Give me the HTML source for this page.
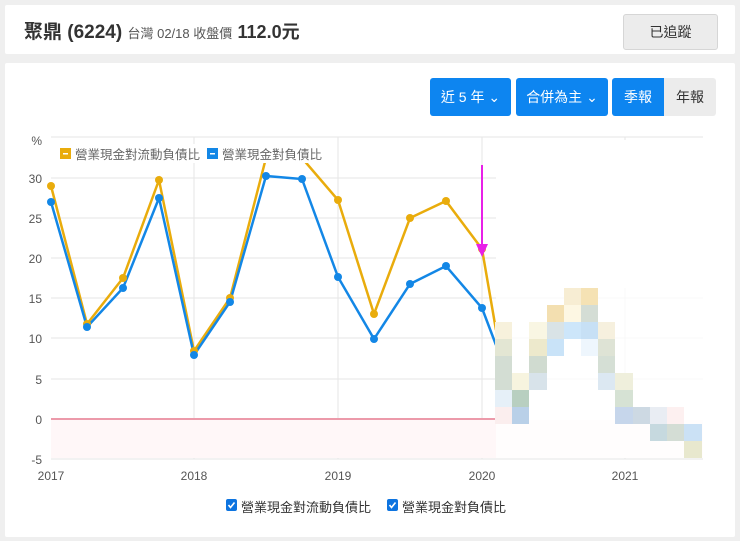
<!DOCTYPE html><html><head><meta charset="utf-8"><style>
body{margin:0;width:740px;height:541px;background:#efefef;font-family:"Liberation Sans","Noto Sans CJK TC",sans-serif;position:relative;overflow:hidden}
.card{position:absolute;background:#fff;left:5px;width:730px;border-radius:2px}
.btn{position:absolute;top:78px;height:38px;line-height:38px;color:#fff;background:#0d85f0;font-size:14px;text-align:center;border-radius:3px}
</style></head><body>
<div class="card" style="top:5px;height:49px"></div>
<div style="position:absolute;left:24px;top:17px;font-size:19px;font-weight:bold;color:#333">聚鼎 (6224) <span style="font-size:13px;font-weight:normal;color:#555">台灣 02/18 收盤價</span> <span style="font-size:18px">112.0元</span></div>
<div style="position:absolute;left:623px;top:14px;width:93px;height:34px;background:#ececec;border:1px solid #d6d6d6;border-radius:3px;text-align:center;line-height:34px;font-size:14px;color:#333">已追蹤</div>
<div class="card" style="top:63px;height:474px"></div>
<div class="btn" style="left:430px;width:81px">近 5 年 ⌄</div>
<div class="btn" style="left:516px;width:92px">合併為主 ⌄</div>
<div class="btn" style="left:612px;width:52px;border-radius:3px 0 0 3px">季報</div>
<div class="btn" style="left:664px;width:52px;background:#ececec;color:#333;border-radius:0 3px 3px 0">年報</div>
<svg style="position:absolute;left:0;top:0" width="740" height="541">
<g stroke="#e6e6e6" stroke-width="1">
<line x1="51" y1="137" x2="703" y2="137"/><line x1="51" y1="178" x2="703" y2="178"/><line x1="51" y1="218" x2="703" y2="218"/><line x1="51" y1="258" x2="703" y2="258"/><line x1="51" y1="298" x2="703" y2="298"/><line x1="51" y1="338" x2="703" y2="338"/><line x1="51" y1="379" x2="703" y2="379"/><line x1="51" y1="459" x2="703" y2="459"/>
<line x1="194" y1="137" x2="194" y2="459"/><line x1="338" y1="137" x2="338" y2="459"/><line x1="482" y1="137" x2="482" y2="459"/><line x1="625" y1="137" x2="625" y2="459"/>
</g>
<rect x="51" y="420" width="652" height="38" fill="#fff7f8"/>
<line x1="51" y1="419" x2="495" y2="419" stroke="#ec9aaa" stroke-width="2"/>
<g font-size="12" fill="#555" text-anchor="end"><text x="42" y="145">%</text><text x="42" y="183">30</text><text x="42" y="223">25</text><text x="42" y="263">20</text><text x="42" y="303">15</text><text x="42" y="343">10</text><text x="42" y="384">5</text><text x="42" y="424">0</text><text x="42" y="464">-5</text></g>
<g font-size="12" fill="#555" text-anchor="middle"><text x="51" y="480">2017</text><text x="194" y="480">2018</text><text x="338" y="480">2019</text><text x="482" y="480">2020</text><text x="625" y="480">2021</text></g>
<polyline fill="none" stroke="#e9ac0c" stroke-width="2.5" points="51,186 87,324 123,278 159,180 194,351 230,298 266,158 302,158 338,200 374,314 410,218 446,201 482,249 496,330"/>
<polyline fill="none" stroke="#1387e6" stroke-width="2.5" points="51,202 87,327 123,288 159,198 194,355 230,302 266,176 302,179 338,277 374,339 410,284 446,266 482,308 496,345"/>
<g fill="#e9ac0c"><circle cx="51" cy="186" r="4"/><circle cx="87" cy="324" r="4"/><circle cx="123" cy="278" r="4"/><circle cx="159" cy="180" r="4"/><circle cx="194" cy="351" r="4"/><circle cx="230" cy="298" r="4"/><circle cx="338" cy="200" r="4"/><circle cx="374" cy="314" r="4"/><circle cx="410" cy="218" r="4"/><circle cx="446" cy="201" r="4"/><circle cx="482" cy="249" r="4"/></g>
<g fill="#1387e6"><circle cx="51" cy="202" r="4"/><circle cx="87" cy="327" r="4"/><circle cx="123" cy="288" r="4"/><circle cx="159" cy="198" r="4"/><circle cx="194" cy="355" r="4"/><circle cx="230" cy="302" r="4"/><circle cx="266" cy="176" r="4"/><circle cx="302" cy="179" r="4"/><circle cx="338" cy="277" r="4"/><circle cx="374" cy="339" r="4"/><circle cx="410" cy="284" r="4"/><circle cx="446" cy="266" r="4"/><circle cx="482" cy="308" r="4"/></g>
<rect x="496" y="140" width="208" height="148" fill="#fff"/>
<rect x="496" y="288" width="208" height="170" fill="#fff" opacity="0.7"/>
<g>
<rect x="495" y="322" width="17" height="17" fill="#f7f1dc"/><rect x="495" y="339" width="17" height="17" fill="#e3e6d3"/><rect x="495" y="356" width="17" height="34" fill="#d3ddd3"/><rect x="495" y="390" width="17" height="17" fill="#e6f0f8"/><rect x="495" y="407" width="17" height="17" fill="#fbeeee"/>
<rect x="512" y="373" width="17" height="17" fill="#f7f4df"/><rect x="512" y="390" width="17" height="17" fill="#b8cfc0"/><rect x="512" y="407" width="17" height="17" fill="#b9d0e8"/>
<rect x="529" y="322" width="18" height="17" fill="#f9f6e3"/><rect x="529" y="339" width="18" height="17" fill="#ede9cc"/><rect x="529" y="356" width="18" height="17" fill="#d0dbd0"/><rect x="529" y="373" width="18" height="17" fill="#d8e3ea"/>
<rect x="547" y="305" width="17" height="17" fill="#f3dfb0"/><rect x="547" y="322" width="17" height="17" fill="#d9e3e6"/><rect x="547" y="339" width="17" height="17" fill="#c9e3f8"/>
<rect x="564" y="288" width="17" height="17" fill="#f7edd3"/><rect x="564" y="305" width="17" height="17" fill="#fdf7e3"/><rect x="564" y="322" width="17" height="17" fill="#cde6fa"/>
<rect x="581" y="288" width="17" height="17" fill="#f5e2b4"/><rect x="581" y="305" width="17" height="17" fill="#d4ddd5"/><rect x="581" y="322" width="17" height="17" fill="#c7e0f5"/><rect x="581" y="339" width="17" height="17" fill="#eef6fd"/>
<rect x="598" y="322" width="17" height="17" fill="#f6f0de"/><rect x="598" y="339" width="17" height="17" fill="#dee3d5"/><rect x="598" y="356" width="17" height="17" fill="#d5dfd5"/><rect x="598" y="373" width="17" height="17" fill="#dce8f2"/>
<rect x="615" y="373" width="18" height="17" fill="#efefdc"/><rect x="615" y="390" width="18" height="17" fill="#d6e2d4"/><rect x="615" y="407" width="18" height="17" fill="#c6d6eb"/>
<rect x="633" y="407" width="17" height="17" fill="#cdd9e3"/><rect x="650" y="407" width="17" height="17" fill="#e9edf3"/><rect x="650" y="424" width="17" height="17" fill="#c6d9df"/>
<rect x="667" y="407" width="17" height="17" fill="#fdf0f0"/><rect x="667" y="424" width="17" height="17" fill="#d4ddd5"/><rect x="684" y="424" width="18" height="17" fill="#cbe1f5"/><rect x="684" y="441" width="18" height="17" fill="#e8e8ce"/>
</g>
<line x1="482" y1="165" x2="482" y2="252" stroke="#e820e8" stroke-width="2"/>
<path d="M476,244 L482,257 L488,244 Z" fill="#e820e8"/>
<rect x="58" y="144" width="269" height="19" fill="#fff"/>
<rect x="60" y="148" width="11" height="11" fill="#e9ac0c"/><rect x="63" y="153" width="5" height="1.5" fill="#fff"/>
<text x="75" y="159" font-size="12.5" fill="#666">營業現金對流動負債比</text>
<rect x="207" y="148" width="11" height="11" fill="#1387e6"/><rect x="210" y="153" width="5" height="1.5" fill="#fff"/>
<text x="222" y="159" font-size="12.5" fill="#666">營業現金對負債比</text>
<rect x="226" y="499" width="11" height="12" rx="2" fill="#0d74e0"/><path d="M228.5,505 l2,2.5 l4,-5" stroke="#fff" stroke-width="1.6" fill="none"/>
<text x="241" y="512" font-size="13" fill="#333">營業現金對流動負債比</text>
<rect x="387" y="499" width="11" height="12" rx="2" fill="#0d74e0"/><path d="M389.5,505 l2,2.5 l4,-5" stroke="#fff" stroke-width="1.6" fill="none"/>
<text x="402" y="512" font-size="13" fill="#333">營業現金對負債比</text>
</svg>
</body></html>
